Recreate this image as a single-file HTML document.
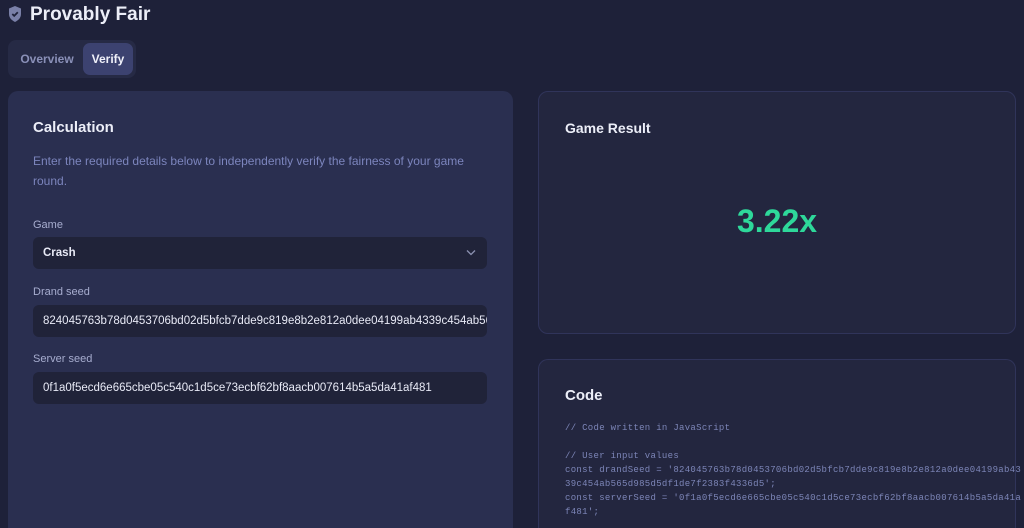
<!DOCTYPE html>
<html style="height:528px;overflow:hidden"><head><meta charset="utf-8"><style>
*{margin:0;padding:0;box-sizing:border-box}
body{width:1024px;height:528px;overflow:hidden;background:#1e2139;font-family:"Liberation Sans",sans-serif;position:relative}
.abs{position:absolute}
.title{left:30px;top:4px;font-size:19px;font-weight:bold;color:#eceef8}
.tabs{left:8px;top:40px;width:128px;height:38px;background:#262a45;border-radius:8px}
.tab{position:absolute;top:3px;height:32px;line-height:32px;font-size:12px;font-weight:bold;border-radius:7px}
.card{left:8px;top:91px;width:505px;height:437px;background:#2a2f50;border-radius:10px 10px 0 0}
.rc{background:#23263f;border:1px solid #30345a;border-radius:10px}
h2{position:absolute;font-size:15px;font-weight:bold;color:#eceef8}
.lbl{position:absolute;left:33px;font-size:11px;color:#a7adcf}
.inp{position:absolute;left:33px;width:454px;height:32px;background:#202339;border-radius:6px;color:#e8eaf6;font-size:11.5px;line-height:32px;padding-left:10px;overflow:hidden;white-space:nowrap}
.code{position:absolute;left:565px;top:421px;font-family:"Liberation Mono",monospace;font-size:9px;letter-spacing:0.3px;line-height:14px;color:#7d86b8;white-space:pre}
</style></head><body>
<svg class="abs" style="left:8px;top:6px" width="14" height="16" viewBox="0 0 14 16"><path d="M7 0L13 2.5V8C13 12 10 14.5 7 16C4 14.5 1 12 1 8V2.5Z" fill="#7a80a8"/><path d="M4.3 8L6.2 9.9L9.8 6.2" stroke="#1e2139" stroke-width="1.8" fill="none"/></svg>
<div class="abs title">Provably Fair</div>
<div class="abs tabs">
<div class="tab" style="left:4px;width:70px;text-align:center;color:#8a90b8">Overview</div>
<div class="tab" style="left:75px;width:50px;text-align:center;background:#3c4270;color:#f0f1fa">Verify</div>
</div>
<div class="abs card"></div>
<h2 style="left:33px;top:119px">Calculation</h2>
<div class="abs" style="left:33px;top:151px;width:436px;font-size:12px;line-height:20px;color:#7c85bd">Enter the required details below to independently verify the fairness of your game round.</div>
<div class="lbl" style="top:219px">Game</div>
<div class="inp" style="top:237px;font-weight:bold">Crash</div>
<svg class="abs" style="left:466px;top:249px" width="10" height="7" viewBox="0 0 10 7"><path d="M1 1.5L5 5.5L9 1.5" stroke="#8a90b0" stroke-width="1.3" fill="none"/></svg>
<div class="lbl" style="top:286px">Drand seed</div>
<div class="inp" style="top:305px">824045763b78d0453706bd02d5bfcb7dde9c819e8b2e812a0dee04199ab4339c454ab565d985d5df1de7f2383f4336d5</div>
<div class="lbl" style="top:353px">Server seed</div>
<div class="inp" style="top:372px">0f1a0f5ecd6e665cbe05c540c1d5ce73ecbf62bf8aacb007614b5a5da41af481</div>
<div class="abs rc" style="left:538px;top:91px;width:478px;height:243px"></div>
<h2 style="left:565px;top:120px;font-size:14px">Game Result</h2>
<div class="abs" style="left:538px;top:203px;width:478px;text-align:center;font-size:32px;font-weight:bold;color:#2ed89a">3.22x</div>
<div class="abs rc" style="left:538px;top:359px;width:478px;height:169px;border-bottom:none;border-radius:10px 10px 0 0"></div>
<h2 style="left:565px;top:387px">Code</h2>
<div class="code">// Code written in JavaScript

// User input values
const drandSeed = '824045763b78d0453706bd02d5bfcb7dde9c819e8b2e812a0dee04199ab43
39c454ab565d985d5df1de7f2383f4336d5';
const serverSeed = '0f1a0f5ecd6e665cbe05c540c1d5ce73ecbf62bf8aacb007614b5a5da41a
f481';</div>
</body></html>
